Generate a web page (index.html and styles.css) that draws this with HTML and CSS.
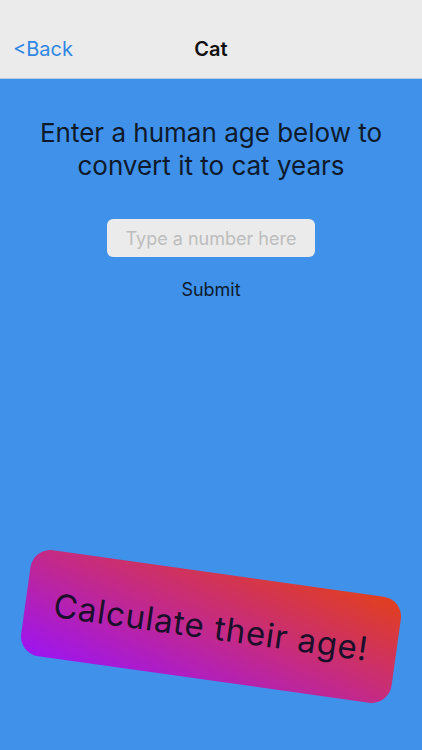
FILE: index.html
```html
<!DOCTYPE html>
<html lang="en">
<head>
    <meta charset="UTF-8">
    <meta name="viewport" content="width=device-width, initial-scale=1.0">
    <title>Cat</title>
    <link rel="stylesheet" href="styles.css">
</head>
<body>

    <div class="screen">
        <!-- Navigation bar -->
        <div class="nav-bar">
            <button class="back-button">&lt;Back</button>
            <h1 class="nav-title">Cat</h1>
        </div>

        <!-- Converter -->
        <div class="content">
            <p class="intro">Enter a human age below to convert it to cat years</p>
            <input class="age-input" type="text" placeholder="Type a number here">
            <button class="submit-button">Submit</button>

            <div class="calc-area">
                <div class="calc-card">Calculate their age!</div>
            </div>
        </div>
    </div>

</body>
</html>
```

FILE: styles.css
```css
* {
    margin: 0;
    padding: 0;
    box-sizing: border-box;
    font-family: Inter, "Noto Sans", Arial, sans-serif;
}

body {
    background: #3f91ea;
    overflow: hidden;
}

.screen {
    width: 100%;
    height: 100vh;
    display: flex;
    flex-direction: column;
}

.nav-bar {
    position: relative;
    height: 79px;
    background: #ebebeb;
    border-bottom: 1px solid #b9cbe0;
    display: flex;
    align-items: flex-end;
    justify-content: center;
    padding-bottom: 17px;
}

.back-button {
    position: absolute;
    left: 13px;
    bottom: 17px;
    background: none;
    border: none;
    font-size: 20px;
    color: #2f86e4;
    cursor: pointer;
}

.nav-title {
    font-size: 20px;
    font-weight: 600;
    color: #111;
}

.content {
    flex: 1;
    display: flex;
    flex-direction: column;
    align-items: center;
    padding-top: 37px;
}

.intro {
    width: 400px;
    font-size: 26px;
    line-height: 33px;
    text-align: center;
    color: #0e1a2b;
}

.age-input {
    margin-top: 37px;
    width: 208px;
    height: 38px;
    border: none;
    border-radius: 6px;
    background: #ebebeb;
    font-size: 18px;
    text-align: center;
    color: #333;
    outline: none;
}

.age-input::placeholder {
    color: #bdbdbd;
}

.submit-button {
    margin-top: 22px;
    background: none;
    border: none;
    font-size: 18px;
    color: #0e1a2b;
    cursor: pointer;
}

.calc-area {
    flex: 1;
    width: 100%;
    display: flex;
    align-items: flex-end;
    justify-content: center;
    padding-bottom: 70px;
}

.calc-card {
    width: 374px;
    height: 107px;
    border-radius: 20px;
    background: linear-gradient(to top right, #9c14f4 0%, #c42a86 50%, #e2401a 100%);
    display: flex;
    align-items: center;
    justify-content: center;
    font-size: 33px;
    letter-spacing: 0.8px;
    color: #1a0f2a;
    transform: rotate(8deg);
}
```
